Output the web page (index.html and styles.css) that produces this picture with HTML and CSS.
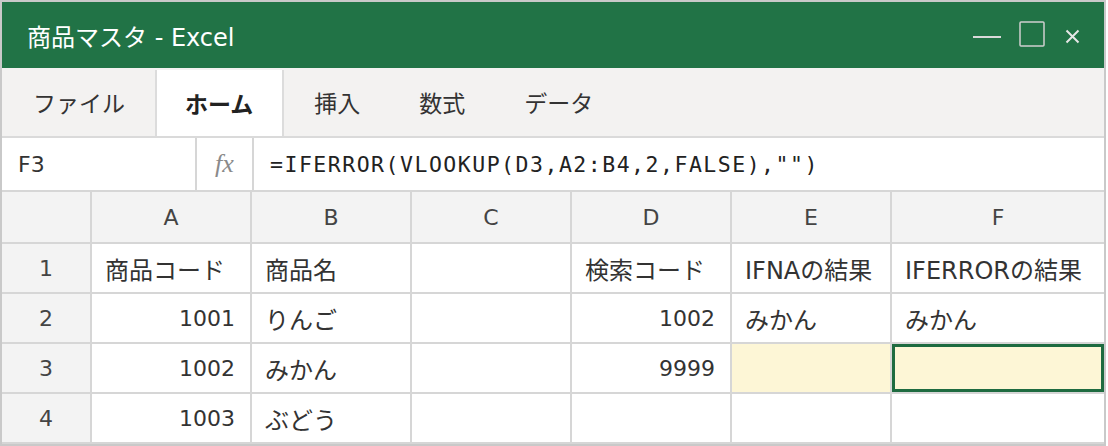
FILE: index.html
```html
<!DOCTYPE html>
<html lang="ja">
<head>
<meta charset="utf-8">
<title>商品マスタ - Excel</title>
<link rel="stylesheet" href="styles.css">
</head>
<body>
<div class="window">
  <div class="titlebar">
    <div class="title">商品マスタ - Excel</div>
    <div class="controls">
      <svg class="ctl-min" width="28" height="4" viewBox="0 0 28 4"><rect x="0" y="1" width="28" height="2" fill="#d9d9d9"/></svg>
      <svg class="ctl-max" width="26" height="26" viewBox="0 0 26 26"><rect x="1" y="1" width="24" height="24" rx="1" fill="none" stroke="#cfcfcf" stroke-width="1.5"/></svg>
      <svg class="ctl-close" width="15" height="15" viewBox="0 0 15 15"><path d="M1.5 1.5 L13.5 13.5 M13.5 1.5 L1.5 13.5" stroke="#e6e6e6" stroke-width="2" fill="none"/></svg>
    </div>
  </div>
  <div class="ribbon">
    <div class="tab tab-first">ファイル</div>
    <div class="tab tab-active">ホーム</div>
    <div class="tab">挿入</div>
    <div class="tab">数式</div>
    <div class="tab">データ</div>
  </div>
  <div class="formulabar">
    <div class="namebox">F3</div>
    <div class="fx">fx</div>
    <div class="formula">=IFERROR(VLOOKUP(D3,A2:B4,2,FALSE),"")</div>
  </div>
  <div class="grid">
    <div class="hd corner"></div>
    <div class="hd">A</div>
    <div class="hd">B</div>
    <div class="hd">C</div>
    <div class="hd">D</div>
    <div class="hd">E</div>
    <div class="hd">F</div>

    <div class="hd">1</div>
    <div class="c">商品コード</div>
    <div class="c">商品名</div>
    <div class="c"></div>
    <div class="c">検索コード</div>
    <div class="c">IFNAの結果</div>
    <div class="c">IFERRORの結果</div>

    <div class="hd">2</div>
    <div class="c num">1001</div>
    <div class="c">りんご</div>
    <div class="c"></div>
    <div class="c num">1002</div>
    <div class="c">みかん</div>
    <div class="c">みかん</div>

    <div class="hd">3</div>
    <div class="c num">1002</div>
    <div class="c">みかん</div>
    <div class="c"></div>
    <div class="c num">9999</div>
    <div class="c hl"></div>
    <div class="c hl sel"></div>

    <div class="hd">4</div>
    <div class="c num">1003</div>
    <div class="c">ぶどう</div>
    <div class="c"></div>
    <div class="c"></div>
    <div class="c"></div>
    <div class="c"></div>
  </div>
</div>
</body>
</html>
```
FILE: styles.css
```css
* { box-sizing: border-box; }
html, body { margin: 0; padding: 0; background: #ffffff; }
body {
  font-family: "DejaVu Sans", "Noto Sans CJK JP", sans-serif;
  color: #333333;
}
.window {
  width: 1106px;
  height: 446px;
  border: 2px solid #c9c9c9;
  display: flex;
  flex-direction: column;
  overflow: hidden;
}
.titlebar {
  height: 66px;
  flex: none;
  background: #217346;
  display: flex;
  align-items: center;
  justify-content: space-between;
  padding: 0 24px 0 25px;
}
.title {
  color: #ffffff;
  font-size: 24px;
}
.controls {
  display: flex;
  align-items: center;
  gap: 18px;
}
.ctl-min { margin-top: 4px; }
.ctl-max { margin-top: -2px; }
.ctl-close { margin-left: 2px; margin-top: 2px; }
.ribbon {
  height: 70px;
  flex: none;
  background: #f3f2f1;
  border-bottom: 2px solid #dadada;
  display: flex;
  align-items: stretch;
}
.tab {
  padding: 0 29px 0 30px;
  display: flex;
  align-items: center;
  font-family: "Noto Sans CJK JP", sans-serif;
  font-size: 23px;
  color: #333333;
}
.tab-first { padding-left: 31px; padding-right: 30px; }
.tab-active {
  background: #ffffff;
  margin-top: 2px;
  border-left: 2px solid #dcdcdc;
  border-right: 2px solid #dcdcdc;
  font-weight: 700;
  color: #222222;
  padding: 0 29px 0 28px;
}
.formulabar {
  height: 54px;
  flex: none;
  display: flex;
  gap: 2px;
  background: #d6d6d6;
  border-bottom: 2px solid #d6d6d6;
}
.namebox, .fx, .formula {
  background: #ffffff;
  display: flex;
  align-items: center;
}
.namebox {
  width: 193px;
  padding-left: 16px;
  font-size: 22px;
  color: #333333;
}
.fx {
  width: 55px;
  justify-content: center;
  font-family: "Liberation Serif", serif;
  font-style: italic;
  font-size: 26px;
  color: #8a8a8a;
}
.formula {
  flex: 1;
  padding-left: 16px;
  font-family: "DejaVu Sans Mono", monospace;
  font-size: 21.5px;
  letter-spacing: 1.5px;
  color: #222222;
}
.grid {
  flex: 1;
  display: grid;
  grid-template-columns: 88px repeat(5, 158px) 1fr;
  grid-template-rows: 50px repeat(4, 48px);
  gap: 2px;
  padding-bottom: 2px;
  background: #d6d6d6;
}
.hd {
  background: #f3f3f3;
  display: flex;
  align-items: center;
  justify-content: center;
  font-size: 22px;
  color: #444444;
}
.c {
  background: #ffffff;
  display: flex;
  align-items: center;
  padding: 0 13px;
  font-size: 24px;
  color: #333333;
  white-space: nowrap;
  overflow: hidden;
}
.num { justify-content: flex-end; padding-right: 15px; font-size: 22px; }
.hl { background: #fdf6d6; }
.sel { box-shadow: inset 0 0 0 3px #1e6b40; }
```
